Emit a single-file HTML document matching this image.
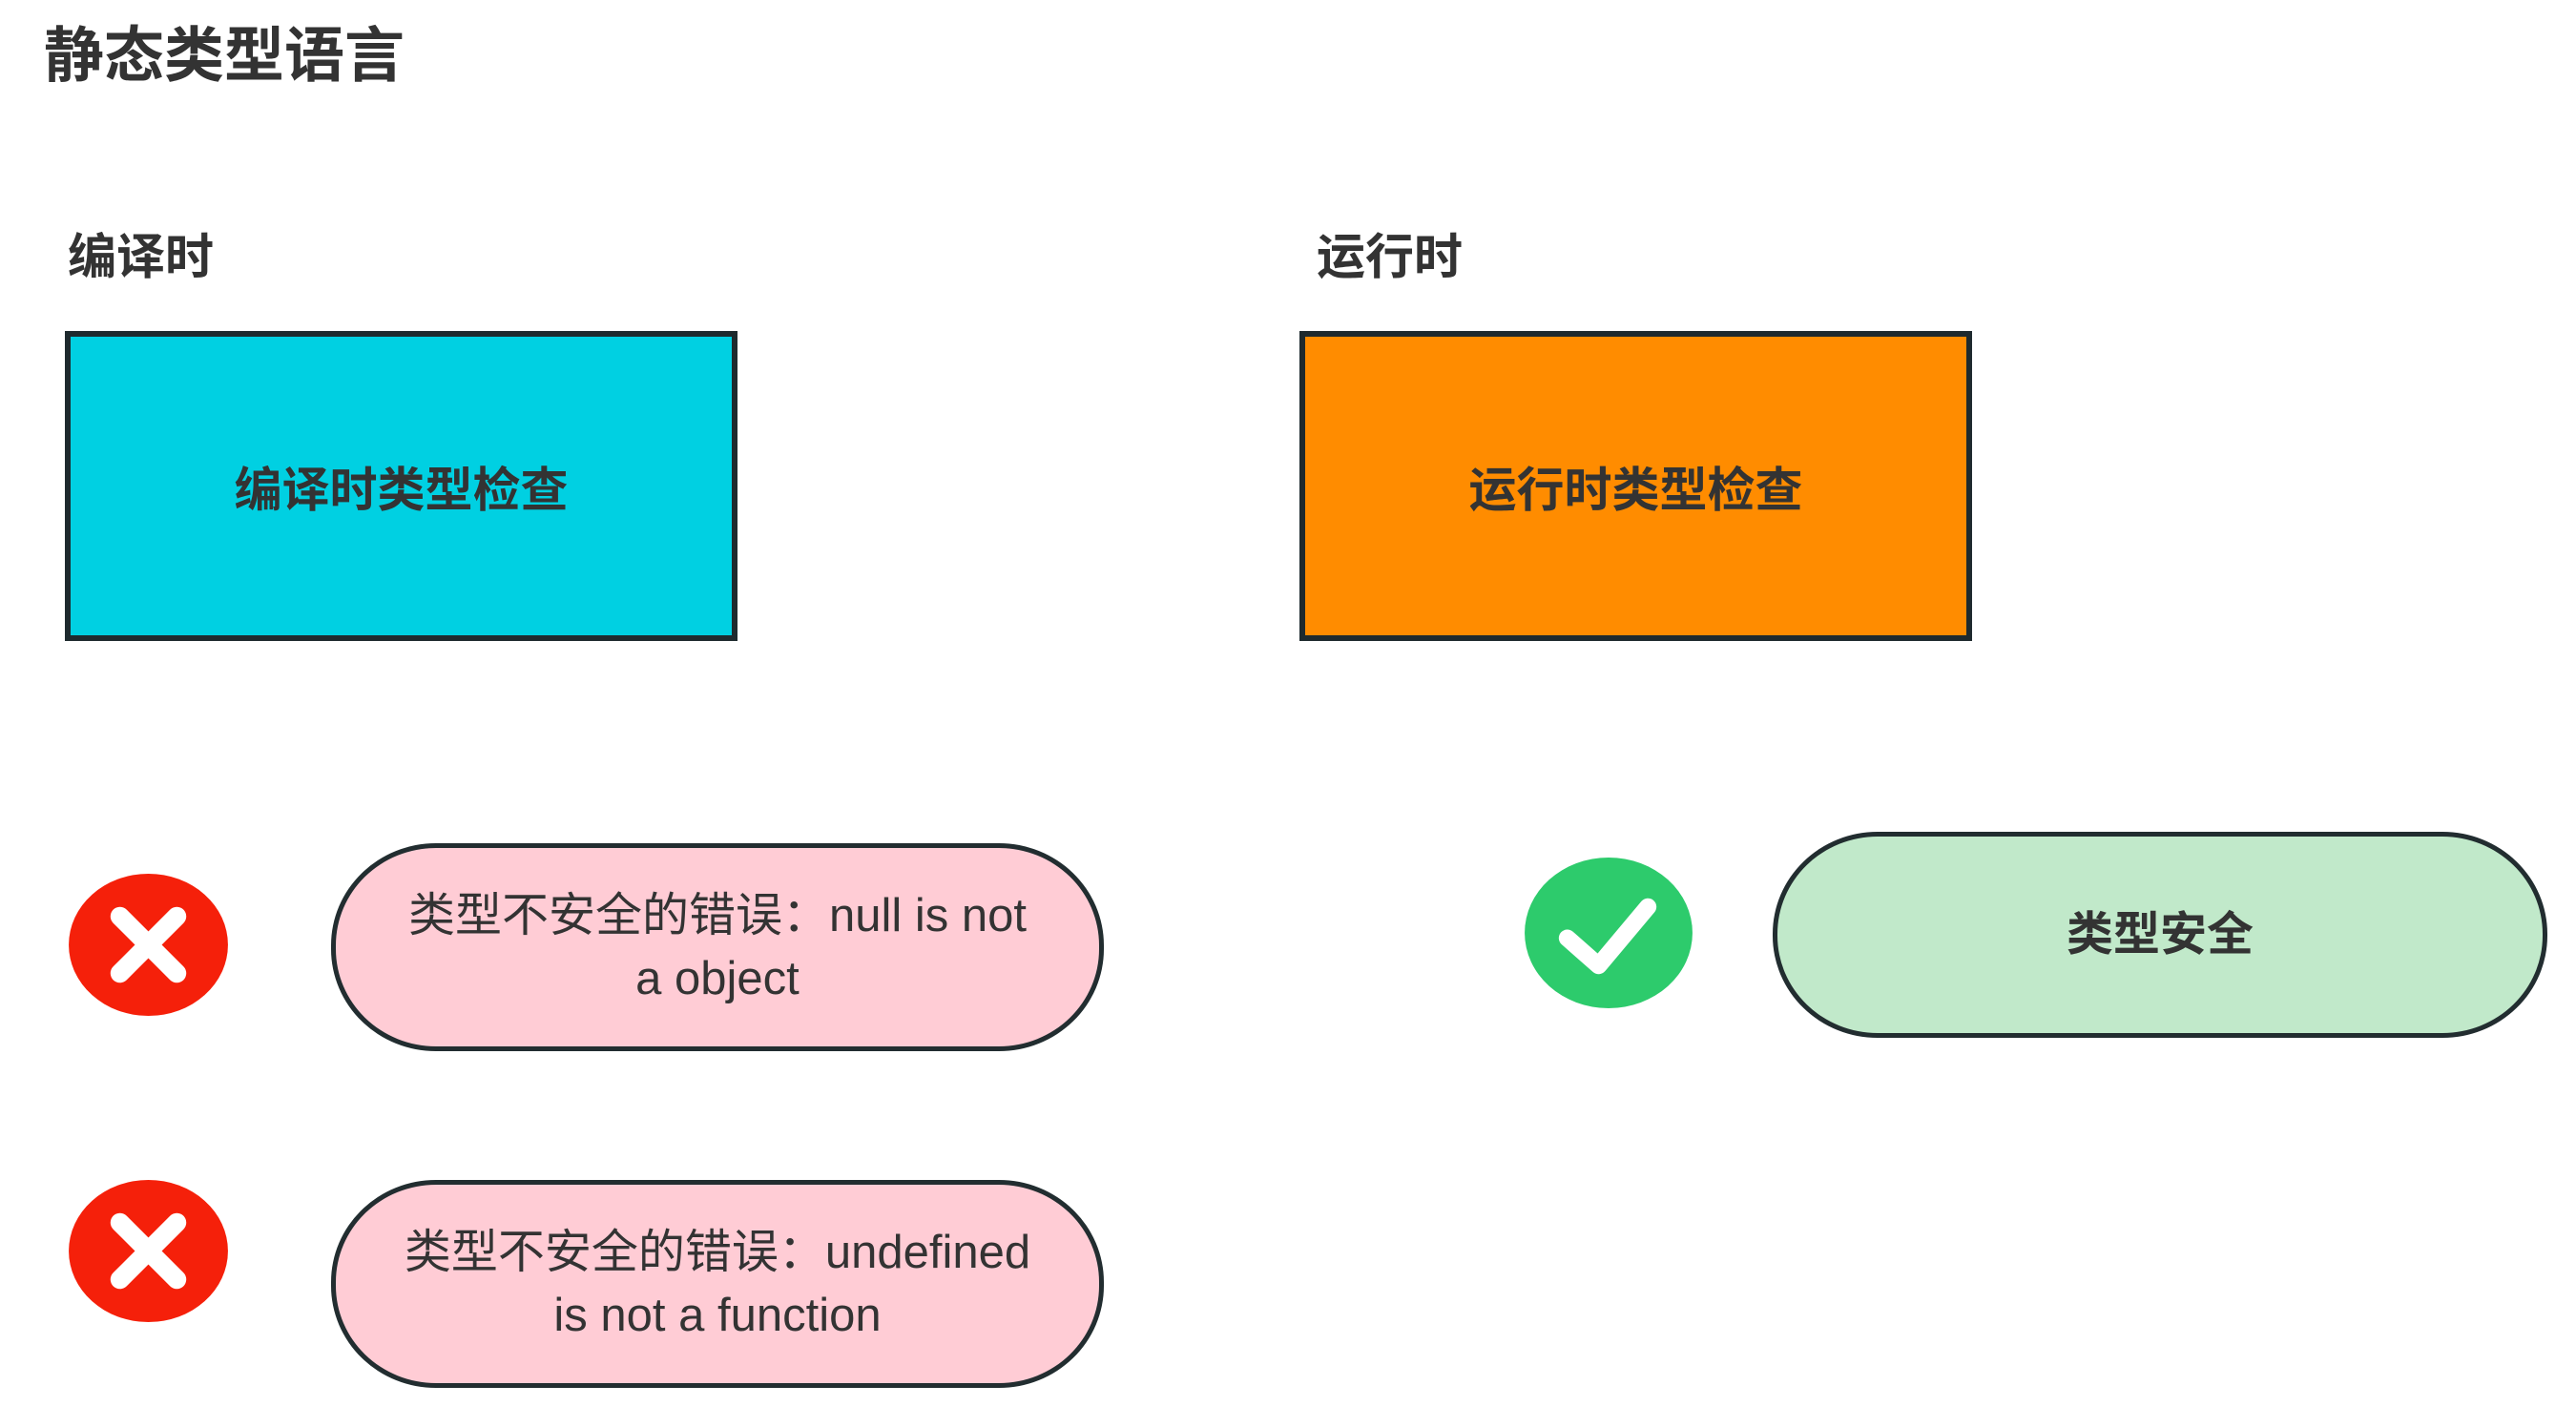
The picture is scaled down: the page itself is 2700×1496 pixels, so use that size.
<!DOCTYPE html>
<html><head><meta charset="utf-8"><style>
body{margin:0;width:2700px;height:1496px;background:#fff;position:relative;overflow:hidden;font-family:"Liberation Sans","Noto Sans CJK SC",sans-serif;color:#333;}
.a{position:absolute;}
.t{font-weight:bold;}
.box{position:absolute;border:6px solid #1e2a2e;box-sizing:border-box;display:flex;align-items:center;justify-content:center;font-size:50px;font-weight:bold;}
.pill{position:absolute;border:5px solid #222d30;box-sizing:border-box;border-radius:110px/107px;display:flex;align-items:center;justify-content:center;text-align:center;font-size:49px;line-height:66px;}
</style></head><body>
<div class="a t" style="left:46px;top:8px;font-size:63px;">静态类型语言</div>
<div class="a" style="left:71px;top:228px;font-size:51px;font-weight:bold;">编译时</div>
<div class="a" style="left:1380px;top:228px;font-size:51px;font-weight:bold;">运行时</div>
<div class="box" style="left:68px;top:347px;width:705px;height:325px;background:#00d0e2;">编译时类型检查</div>
<div class="box" style="left:1362px;top:347px;width:705px;height:325px;background:#ff8c00;">运行时类型检查</div>

<svg class="a" style="left:72px;top:916px" width="167" height="149" viewBox="0 0 168 150"><ellipse cx="84" cy="75" rx="84" ry="75" fill="#f5200a"/><path d="M54 45 L114 105 M114 45 L54 105" stroke="#fff" stroke-width="20" stroke-linecap="round"/></svg>
<svg class="a" style="left:72px;top:1237px" width="167" height="149" viewBox="0 0 168 150"><ellipse cx="84" cy="75" rx="84" ry="75" fill="#f5200a"/><path d="M54 45 L114 105 M114 45 L54 105" stroke="#fff" stroke-width="20" stroke-linecap="round"/></svg>
<svg class="a" style="left:1598px;top:899px" width="176" height="158" viewBox="0 0 177 159"><ellipse cx="88.5" cy="79.5" rx="88.5" ry="79.5" fill="#2dcb6c"/><path d="M45 85 L78 114 L130 52" stroke="#fff" stroke-width="18" fill="none" stroke-linecap="round" stroke-linejoin="round"/></svg>

<div class="pill" style="left:347px;top:884px;width:810px;height:218px;background:#ffccd5;">类型不安全的错误：null is not<br>a object</div>
<div class="pill" style="left:347px;top:1237px;width:810px;height:218px;background:#ffccd5;">类型不安全的错误：undefined<br>is not a function</div>
<div class="pill" style="left:1858px;top:872px;width:812px;height:216px;background:#c1e9ca;font-weight:bold;">类型安全</div>
</body></html>
